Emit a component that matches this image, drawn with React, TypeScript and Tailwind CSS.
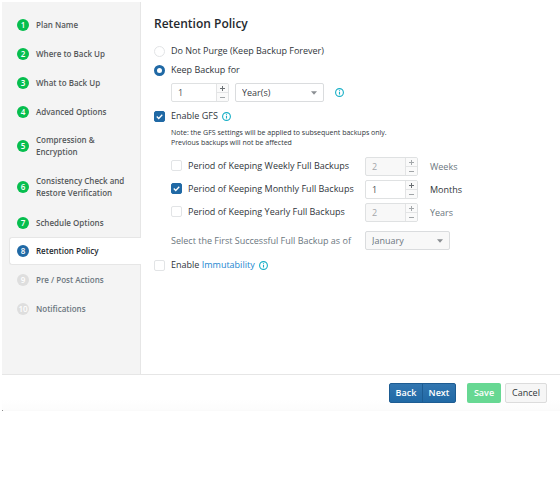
import { useState } from "react";

type StepState = "done" | "active" | "pending";

const steps: { label: string; state: StepState }[] = [
  { label: "Plan Name", state: "done" },
  { label: "Where to Back Up", state: "done" },
  { label: "What to Back Up", state: "done" },
  { label: "Advanced Options", state: "done" },
  { label: "Compression & Encryption", state: "done" },
  { label: "Consistency Check and Restore Verification", state: "done" },
  { label: "Schedule Options", state: "done" },
  { label: "Retention Policy", state: "active" },
  { label: "Pre / Post Actions", state: "pending" },
  { label: "Notifications", state: "pending" },
];

const rowStyles: Record<StepState, string> = {
  done: "min-h-[29px] border-r border-[#e6e6e6] text-[#55585a]",
  active: "min-h-7 rounded-l-[3px] border border-r-0 border-[#e6e6e6] bg-white text-[#24292e]",
  pending: "min-h-[29px] border-r border-[#e6e6e6] text-[#6c7780]",
};

const badgeStyles: Record<StepState, string> = {
  done: "bg-[#06be4e] text-white",
  active: "bg-[#2069a5] text-white",
  pending: "bg-[#dedede] text-white",
};

function StepItem({ index, label, state }: { index: number; label: string; state: StepState }) {
  return (
    <li className={state === "active" ? "pl-[7px]" : ""}>
      <a
        href="#"
        aria-current={state === "active" ? "step" : undefined}
        className={`flex items-center gap-[7px] pr-1 text-[8px] leading-3 font-semibold ${
          state === "active" ? "pl-[7px]" : "pl-[15px]"
        } ${rowStyles[state]} ${label.length > 22 ? "pt-2 pb-[9px]" : ""}`}
      >
        <span
          className={`flex size-3 shrink-0 items-center justify-center rounded-full text-[8px] ${badgeStyles[state]}`}
        >
          {index}
        </span>
        <span>{label}</span>
      </a>
    </li>
  );
}

function InfoIcon() {
  return (
    <svg viewBox="0 0 18 18" className="size-[9px] shrink-0" fill="none" stroke="#17afc6" aria-hidden="true">
      <circle cx="9" cy="9" r="7.8" strokeWidth="2.2" />
      <path d="M9 8v5.2M9 4.6v2" strokeWidth="2.2" />
    </svg>
  );
}

function Checkbox({ id, defaultChecked = false }: { id: string; defaultChecked?: boolean }) {
  return (
    <span className="grid size-[11px] shrink-0">
      <input
        id={id}
        type="checkbox"
        defaultChecked={defaultChecked}
        className="peer col-start-1 row-start-1 size-[11px] appearance-none rounded-[2px] border border-[#e2e4e6] bg-white checked:border-[#2069a5] checked:bg-[#2069a5]"
      />
      <svg
        viewBox="0 0 22 22"
        className="pointer-events-none invisible col-start-1 row-start-1 size-[11px] peer-checked:visible"
        fill="none"
        stroke="white"
        strokeWidth="2.6"
        aria-hidden="true"
      >
        <path d="M5.5 11l4 4 7-7.5" />
      </svg>
    </span>
  );
}

function Radio({ id, defaultChecked = false }: { id: string; defaultChecked?: boolean }) {
  return (
    <input
      id={id}
      type="radio"
      name="retention"
      defaultChecked={defaultChecked}
      className="size-[11px] shrink-0 appearance-none rounded-full border border-[#e2e4e6] bg-white checked:border-[3px] checked:border-[#2069a5]"
    />
  );
}

function NumberField({
  label,
  initial,
  width,
  disabled = false,
}: {
  label: string;
  initial: number;
  width: string;
  disabled?: boolean;
}) {
  const [value, setValue] = useState(initial);
  return (
    <div
      className={`flex h-[19px] overflow-hidden rounded-[2px] border border-[#dfe1e2] ${width} ${
        disabled ? "bg-[#f8f8f8] text-[#a3a7aa]" : "bg-white text-[#4c5257]"
      }`}
    >
      <input
        type="text"
        inputMode="numeric"
        aria-label={label}
        value={value}
        disabled={disabled}
        onChange={(e) => setValue(Number(e.target.value) || 0)}
        className="w-0 min-w-0 flex-1 pl-[6px] text-[9px] leading-3"
      />
      <div
        className={`flex w-3 flex-col border-l border-[#e3e4e5] bg-[#fafafa] ${
          disabled ? "text-[#a3a7aa]" : "text-[#6a6f73]"
        }`}
      >
        <button
          type="button"
          aria-label={`Increase ${label}`}
          disabled={disabled}
          onClick={() => setValue(value + 1)}
          className="flex flex-1 items-center justify-center border-b border-[#e3e4e5]"
        >
          <svg viewBox="0 0 10 10" className="size-[5px]" stroke="currentColor" strokeWidth="2">
            <path d="M0 5h10M5 0v10" />
          </svg>
        </button>
        <button
          type="button"
          aria-label={`Decrease ${label}`}
          disabled={disabled}
          onClick={() => setValue(Math.max(1, value - 1))}
          className="flex flex-1 items-center justify-center"
        >
          <svg viewBox="0 0 10 10" className="size-[5px]" stroke="#a0a4a7" strokeWidth="2">
            <path d="M0 5h10" />
          </svg>
        </button>
      </div>
    </div>
  );
}

function SelectField({
  id,
  label,
  options,
  width,
  muted = false,
}: {
  id: string;
  label?: string;
  options: string[];
  width: string;
  muted?: boolean;
}) {
  return (
    <div className={`grid h-[19px] ${width}`}>
      <select
        id={id}
        aria-label={label}
        disabled={muted}
        className={`col-start-1 row-start-1 w-full appearance-none rounded-[2px] border border-[#dadcde] pl-[6px] text-[9px] leading-3 opacity-100 ${
          muted ? "bg-[#f8f8f8] text-[#6c7780]" : "bg-white text-[#3a4045]"
        }`}
      >
        {options.map((option) => (
          <option key={option}>{option}</option>
        ))}
      </select>
      <svg
        viewBox="0 0 12 8"
        className="pointer-events-none col-start-1 row-start-1 mr-[7px] h-1 w-[6px] self-center justify-self-end"
        fill="#8b8f93"
        aria-hidden="true"
      >
        <path d="M0 0.5h12L6 7.5z" />
      </svg>
    </div>
  );
}

const periods = [
  { id: "weekly", label: "Period of Keeping Weekly Full Backups", unit: "Weeks", value: 2, enabled: false },
  { id: "monthly", label: "Period of Keeping Monthly Full Backups", unit: "Months", value: 1, enabled: true },
  { id: "yearly", label: "Period of Keeping Yearly Full Backups", unit: "Years", value: 2, enabled: false },
];

export default function App() {
  return (
    <div className="bg-white pt-[2px] pl-[2px] font-['Open_Sans','Noto_Sans',sans-serif] text-[9px] leading-3 text-[#30363b]">
      <div className="flex border-b border-[#e6e6e6]">
        <nav aria-label="Plan steps" className="flex w-[139px] shrink-0 flex-col bg-[#f4f4f4]">
          <div className="h-2 border-r border-[#e6e6e6]" />
          <ol>
            {steps.map((step, i) => (
              <StepItem key={step.label} index={i + 1} label={step.label} state={step.state} />
            ))}
          </ol>
          <div className="flex-1 border-r border-[#e6e6e6]" />
        </nav>

        <main className="min-w-0 flex-1 pt-[14px] pr-3 pb-[103px] pl-[13px]">
          <h1 className="text-[12px] leading-4 font-semibold text-[#24292e]">Retention Policy</h1>

          <div className="mt-[13px] flex items-center gap-[6px]">
            <Radio id="forever" />
            <label htmlFor="forever">Do Not Purge (Keep Backup Forever)</label>
          </div>
          <div className="mt-[7px] flex items-center gap-[6px]">
            <Radio id="keep" defaultChecked />
            <label htmlFor="keep">Keep Backup for</label>
          </div>
          <div className="mt-[7px] flex items-center pl-[17px]">
            <NumberField label="Retention length" initial={1} width="w-[58px]" />
            <div className="ml-[6px]">
              <SelectField id="unit" label="Retention unit" options={["Year(s)", "Month(s)", "Day(s)"]} width="w-[89px]" />
            </div>
            <span className="ml-[11px]">
              <InfoIcon />
            </span>
          </div>

          <div className="mt-2 flex items-center">
            <Checkbox id="gfs" defaultChecked />
            <label htmlFor="gfs" className="mr-1 ml-[6px]">
              Enable GFS
            </label>
            <InfoIcon />
          </div>
          <p className="mt-[6px] pl-[17px] text-[7px] leading-[10px]">
            Note: the GFS settings will be applied to subsequent backups only.
            <br />
            Previous backups will not be affected
          </p>

          <div className="mt-[9px] flex flex-col gap-1 pl-[17px]">
            {periods.map((p) => (
              <div key={p.id} className="flex items-center">
                <div className="flex w-[194px] items-center gap-[6px] pb-[2px]">
                  <Checkbox id={p.id} defaultChecked={p.enabled} />
                  <label htmlFor={p.id} className="whitespace-nowrap">
                    {p.label}
                  </label>
                </div>
                <NumberField label={p.unit} initial={p.value} width="w-[53px]" disabled={!p.enabled} />
                <span className={`ml-3 ${p.enabled ? "" : "text-[#6c7780]"}`}>{p.unit}</span>
              </div>
            ))}
          </div>

          <div className="mt-[9px] flex items-center pl-[17px]">
            <label htmlFor="month" className="w-[194px] whitespace-nowrap text-[#6c7780]">
              Select the First Successful Full Backup as of
            </label>
            <SelectField id="month" options={["January", "February", "March"]} width="w-[85px]" muted />
          </div>

          <div className="mt-[9px] flex items-center">
            <Checkbox id="immutability" />
            <label htmlFor="immutability" className="mr-1 ml-[6px]">
              Enable{" "}
              <a href="#" className="text-[#1a86d0]">
                Immutability
              </a>
            </label>
            <InfoIcon />
          </div>
        </main>
      </div>

      <footer className="flex justify-end bg-linear-to-b from-white from-70% to-[#fcfcfc] pt-2 pr-[13px] pb-[7px]">
        <div className="flex overflow-hidden rounded-[2px] border border-[#1d5c92] bg-linear-to-b from-[#3276b0] to-[#2069a5] font-semibold text-white">
          <button type="button" className="h-[18px] w-[33px] border-r border-[#1d5c92]">
            Back
          </button>
          <button type="button" className="h-[18px] w-8">
            Next
          </button>
        </div>
        <button type="button" className="ml-[11px] h-5 w-[34px] rounded-[2px] bg-[#67d893] font-semibold text-white">
          Save
        </button>
        <button type="button" className="ml-1 h-5 w-[42px] rounded-[2px] border border-[#dcdcdc] bg-[#f6f6f6]">
          Cancel
        </button>
      </footer>
      <div className="h-px bg-[#fafafa]">
        <div className="size-px bg-[#8c8c8c]" />
      </div>
    </div>
  );
}
